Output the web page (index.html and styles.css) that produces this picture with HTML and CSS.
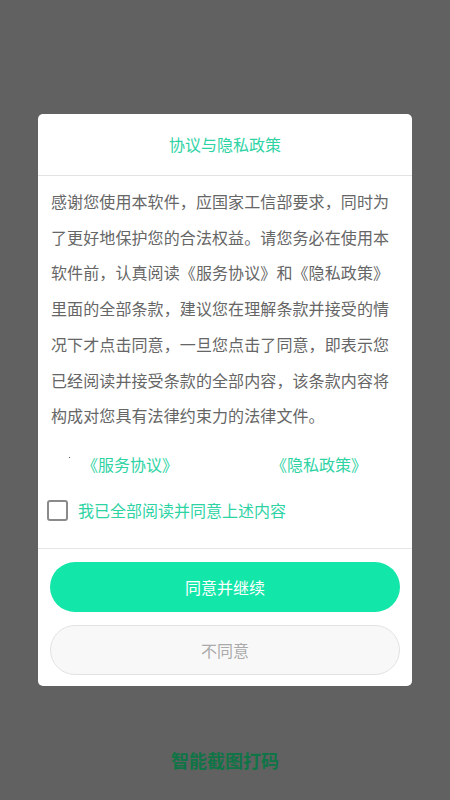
FILE: index.html
```html
<!DOCTYPE html>
<html lang="zh-CN">
<head>
<meta charset="utf-8">
<title>协议与隐私政策</title>
<link rel="stylesheet" href="styles.css">
</head>
<body>
<div class="screen">
  <div class="dialog">
    <div class="dialog-header">协议与隐私政策</div>
    <div class="dialog-body">
      <p class="terms">感谢您使用本软件，应国家工信部要求，同时为了更好地保护您的合法权益。请您务必在使用本软件前，认真阅读《服务协议》和《隐私政策》里面的全部条款，建议您在理解条款并接受的情况下才点击同意，一旦您点击了同意，即表示您已经阅读并接受条款的全部内容，该条款内容将构成对您具有法律约束力的法律文件。</p>
      <div class="links">
        <span class="dot"></span>
        <span class="link link-service">《服务协议》</span>
        <span class="link link-privacy">《隐私政策》</span>
      </div>
      <label class="agree">
        <span class="checkbox"></span>
        <span class="agree-text">我已全部阅读并同意上述内容</span>
      </label>
    </div>
    <div class="dialog-footer">
      <div class="btn btn-primary">同意并继续</div>
      <div class="btn btn-secondary">不同意</div>
    </div>
  </div>
  <div class="app-name">智能截图打码</div>
</div>
</body>
</html>
```

FILE: styles.css
```css
html, body {
  margin: 0;
  padding: 0;
}
body {
  background: #616161;
  font-family: "Noto Sans CJK SC", "Noto Sans", sans-serif;
}
.screen {
  width: 450px;
  height: 800px;
  padding-top: 114px;
  box-sizing: border-box;
  display: flex;
  flex-direction: column;
  align-items: center;
}
.dialog {
  width: 374px;
  background: #ffffff;
  border-radius: 5px;
  overflow: hidden;
}
.dialog-header {
  height: 62px;
  display: flex;
  align-items: center;
  justify-content: center;
  font-size: 16px;
  color: #2ed3a4;
  border-bottom: 1px solid #e3e3e3;
  box-sizing: border-box;
  padding-bottom: 1px;
}
.dialog-body {
  padding: 8px 0 21px 0;
  border-bottom: 1px solid #e6e6e6;
}
.terms {
  margin: 0;
  padding: 0 13px;
  font-size: 16px;
  line-height: 35.7px;
  color: #666666;
  letter-spacing: 0.1px;
}
.links {
  height: 60px;
  display: flex;
  align-items: center;
  position: relative;
}
.dot {
  position: absolute;
  left: 31px;
  top: 23px;
  width: 1px;
  height: 1px;
  background: #555;
}
.link {
  font-size: 16px;
  color: #2ed3a4;
}
.link-service {
  margin-left: 44px;
}
.link-privacy {
  margin-left: 93px;
}
.agree {
  height: 33px;
  display: flex;
  align-items: center;
  padding-left: 9px;
}
.checkbox {
  width: 21px;
  height: 21px;
  box-sizing: border-box;
  border: 2px solid #8a8a8a;
  border-radius: 3px;
  flex: none;
}
.agree-text {
  margin-left: 10px;
  font-size: 16px;
  color: #2ed3a4;
}
.dialog-footer {
  padding: 13px 12px 11px;
  display: flex;
  flex-direction: column;
  gap: 13px;
}
.btn {
  height: 50px;
  border-radius: 25px;
  display: flex;
  align-items: center;
  justify-content: center;
  font-size: 16px;
  box-sizing: border-box;
}
.btn-primary {
  background: #13e6a9;
  color: #ffffff;
}
.btn-secondary {
  background: #f8f8f8;
  border: 1px solid #e2e2e2;
  color: #aaaaaa;
}
.app-name {
  margin-top: 62px;
  font-size: 18px;
  line-height: 24px;
  font-weight: bold;
  color: #0f7446;
}
```
